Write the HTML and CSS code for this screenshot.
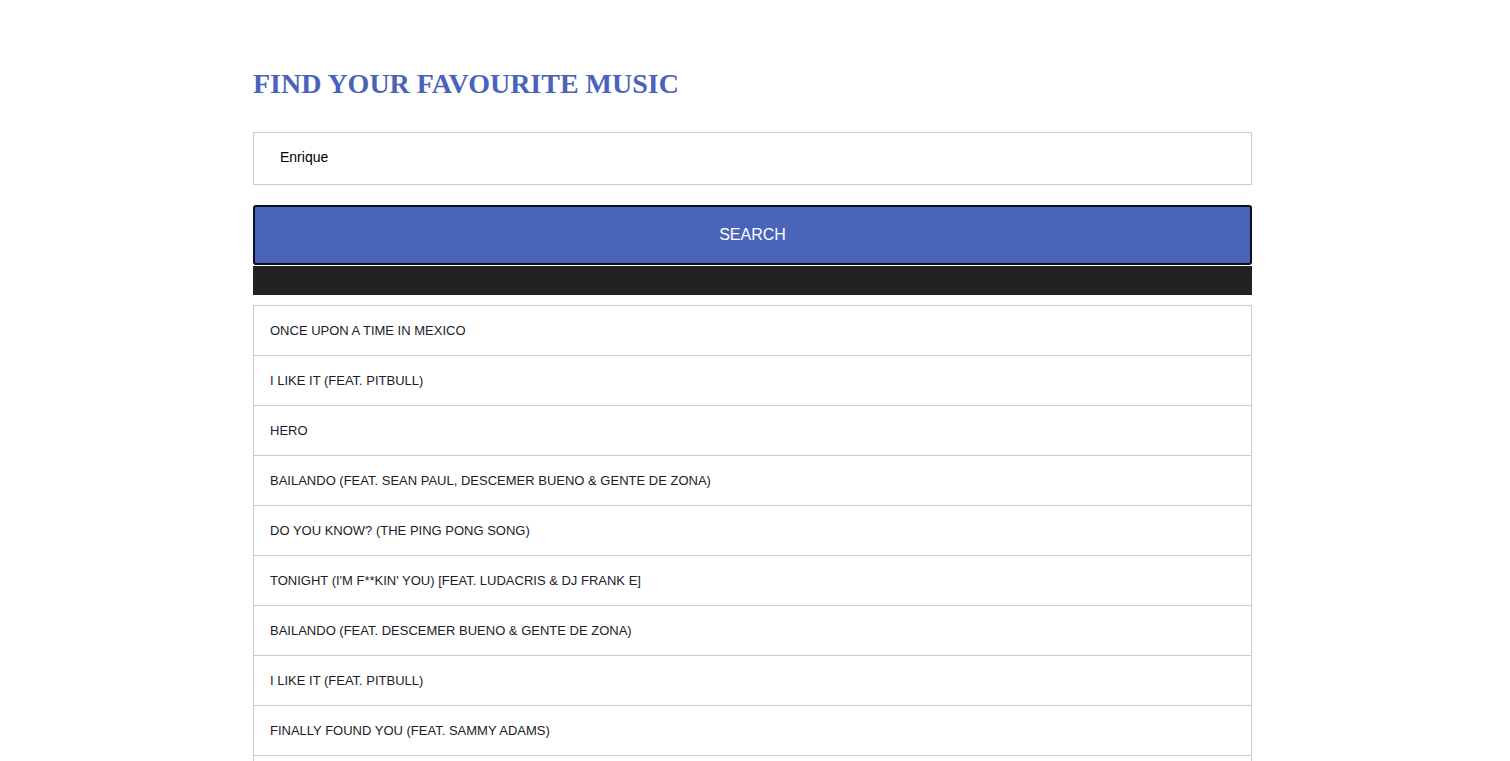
FILE: index.html
```html
<!DOCTYPE html>
<html lang="en">
<head>
<meta charset="utf-8">
<title>Find your favourite music</title>
<link rel="stylesheet" href="styles.css">
</head>
<body>
<main class="container">
  <h1 class="title">FIND YOUR FAVOURITE MUSIC</h1>
  <form class="search-form">
    <input class="search-input" type="text" value="Enrique">
    <button class="search-button" type="button">SEARCH</button>
  </form>
  <div class="status-bar"></div>
  <ul class="results">
    <li class="result">ONCE UPON A TIME IN MEXICO</li>
    <li class="result">I LIKE IT (FEAT. PITBULL)</li>
    <li class="result">HERO</li>
    <li class="result">BAILANDO (FEAT. SEAN PAUL, DESCEMER BUENO &amp; GENTE DE ZONA)</li>
    <li class="result">DO YOU KNOW? (THE PING PONG SONG)</li>
    <li class="result">TONIGHT (I'M F**KIN' YOU) [FEAT. LUDACRIS &amp; DJ FRANK E]</li>
    <li class="result">BAILANDO (FEAT. DESCEMER BUENO &amp; GENTE DE ZONA)</li>
    <li class="result">I LIKE IT (FEAT. PITBULL)</li>
    <li class="result">FINALLY FOUND YOU (FEAT. SAMMY ADAMS)</li>
    <li class="result">ESCAPE</li>
  </ul>
</main>
</body>
</html>
```

FILE: styles.css
```css
html, body {
  margin: 0;
  padding: 0;
  background: #ffffff;
}

body {
  font-family: "Liberation Sans", Arial, sans-serif;
  padding-right: 5px;
}

.container {
  width: 999px;
  margin: 0 auto;
  padding-top: 68px;
}

.title {
  margin: 0 0 32px 0;
  font-family: "Liberation Serif", "Times New Roman", serif;
  font-weight: bold;
  font-size: 28px;
  line-height: 32px;
  color: #4a63ba;
}

.search-form {
  display: flex;
  flex-direction: column;
}

.search-input {
  box-sizing: border-box;
  height: 53px;
  width: 100%;
  margin: 0;
  padding: 0 26px 3px 26px;
  border: 1px solid #cccccc;
  font-family: "Liberation Sans", Arial, sans-serif;
  font-size: 14px;
  color: #000;
  outline: none;
}

.search-button {
  box-sizing: border-box;
  height: 60px;
  width: 100%;
  margin: 20px 0 0 0;
  border: 2px solid #0d0f1e;
  border-radius: 3px;
  background: #4a64ba;
  color: #ffffff;
  font-family: "Liberation Sans", Arial, sans-serif;
  font-size: 16px;
  cursor: pointer;
}

.status-bar {
  height: 29px;
  margin-top: 1px;
  background: #222222;
}

.results {
  list-style: none;
  margin: 10px 0 0 0;
  padding: 0;
  border-top: 1px solid #cccccc;
}

.result {
  box-sizing: border-box;
  height: 50px;
  display: flex;
  align-items: center;
  padding: 0 16px;
  border: 1px solid #cccccc;
  border-top: none;
  font-size: 13px;
  color: #211a28;
}
```
